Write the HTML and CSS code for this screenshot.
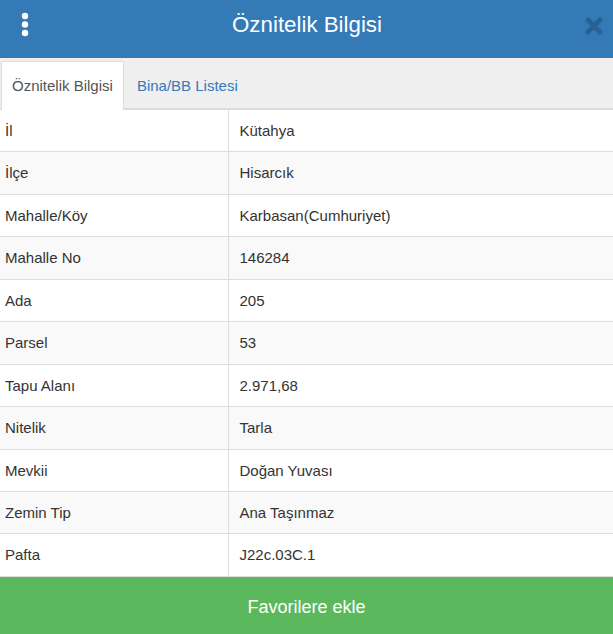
FILE: index.html
```html
<!DOCTYPE html>
<html lang="tr">
<head>
<meta charset="utf-8">
<title>Öznitelik Bilgisi</title>
<link rel="stylesheet" href="styles.css">
</head>
<body>
<div class="panel">
  <header class="header">
    <span class="menu-btn">
      <svg width="10" height="26" viewBox="0 0 10 26"><circle cx="5" cy="4" r="3.2" fill="#fff"/><circle cx="5" cy="12.5" r="3.2" fill="#fff"/><circle cx="5" cy="21" r="3.2" fill="#fff"/></svg>
    </span>
    <h1 class="title">Öznitelik Bilgisi</h1>
    <span class="close-btn">
      <svg width="20" height="20" viewBox="0 0 20 20"><path d="M4 4 L16 16 M16 4 L4 16" stroke="#2a6195" stroke-width="5" stroke-linecap="round" fill="none"/></svg>
    </span>
  </header>
  <nav class="tabs">
    <a class="tab active">Öznitelik Bilgisi</a>
    <a class="tab">Bina/BB Listesi</a>
  </nav>
  <table class="attr-table">
    <tbody>
      <tr><td>İl</td><td>Kütahya</td></tr>
      <tr><td>İlçe</td><td>Hisarcık</td></tr>
      <tr><td>Mahalle/Köy</td><td>Karbasan(Cumhuriyet)</td></tr>
      <tr><td>Mahalle No</td><td>146284</td></tr>
      <tr><td>Ada</td><td>205</td></tr>
      <tr><td>Parsel</td><td>53</td></tr>
      <tr><td>Tapu Alanı</td><td>2.971,68</td></tr>
      <tr><td>Nitelik</td><td>Tarla</td></tr>
      <tr><td>Mevkii</td><td>Doğan Yuvası</td></tr>
      <tr><td>Zemin Tip</td><td>Ana Taşınmaz</td></tr>
      <tr><td>Pafta</td><td>J22c.03C.1</td></tr>
    </tbody>
  </table>
  <button class="fav-btn">Favorilere ekle</button>
</div>
</body>
</html>
```
FILE: styles.css
```css
* { box-sizing: border-box; }
html, body { margin: 0; padding: 0; }
body {
  font-family: "Liberation Sans", Arial, sans-serif;
  font-size: 15px;
  line-height: 1.42857;
  color: #333;
  background: #fff;
}
.panel {
  width: 613px;
  height: 634px;
  display: flex;
  flex-direction: column;
  overflow: hidden;
}
.header {
  height: 58px;
  background: #337ab7;
  display: flex;
  align-items: center;
  justify-content: space-between;
  padding: 0 9px 0 20px;
  flex-shrink: 0;
}
.menu-btn { display: flex; width: 10px; margin-top: -8px; }
.title {
  margin: 0;
  font-size: 22.3px;
  font-weight: normal;
  color: #fff;
  line-height: 1;
  margin-top: -7px;
}
.close-btn { display: flex; margin-top: -6px; }
.tabs {
  background: #efefef;
  padding: 3px 0 0 1px;
  border-bottom: 2px solid #ddd;
  display: flex;
  flex-shrink: 0;
}
.tab {
  padding: 13px 10px 14px;
  line-height: 21px;
  border: 1px solid transparent;
  border-bottom: none;
  margin-bottom: -2px;
  margin-right: 2px;
  color: #337ab7;
  cursor: pointer;
}
.tab.active {
  background: #fff;
  color: #555;
  border-color: #ddd;
}
.attr-table {
  width: 100%;
  border-collapse: collapse;
  flex-shrink: 0;
}
.attr-table td {
  padding: 10px 10px 10px 11px;
  line-height: 21.43px;
  border-top: 1px solid #ddd;
  vertical-align: top;
}
.attr-table tr:first-child td { border-top: none; }
.attr-table tr:last-child td { border-bottom: 1px solid #ddd; }
.attr-table td:first-child {
  width: 228px;
  padding-left: 5px;
  border-right: 1px solid #ddd;
}
.attr-table tr:nth-child(even) td { background: #f9f9f9; }
.fav-btn {
  flex: 1;
  width: 100%;
  border: none;
  background: #5cb85c;
  color: #fff;
  font-family: "Liberation Sans", Arial, sans-serif;
  font-size: 18px;
  padding: 5px 0 0;
  margin: 0;
  cursor: pointer;
}
```
